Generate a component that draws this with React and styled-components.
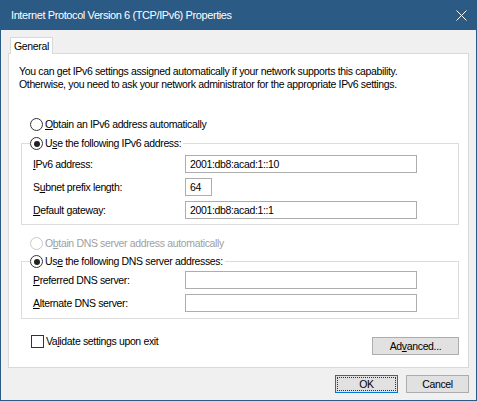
import React from 'react'
import styled, { createGlobalStyle } from 'styled-components'

const GlobalStyle = createGlobalStyle`
  html, body {
    margin: 0;
    padding: 0;
    background: #ffffff;
  }
  body {
    font-family: "Liberation Sans", Arial, sans-serif;
    font-size: 10.5px;
    letter-spacing: -0.35px;
    color: #000;
  }
`

const Window = styled.div`
  width: 477px;
  height: 401px;
  box-sizing: border-box;
  border: 1px solid #2b5a84;
  border-top: none;
  background: #f0f0f0;
  display: flex;
  flex-direction: column;
`

const TitleBar = styled.div`
  height: 30px;
  flex: none;
  background: #2b5a84;
  color: #fff;
  font-size: 11px;
  letter-spacing: -0.4px;
  display: flex;
  align-items: center;
  justify-content: space-between;
  padding: 0 9px 0 10px;
`

const Close = styled.svg`
  width: 11px;
  height: 11px;
`

const Body = styled.div`
  flex: 1;
  display: flex;
  flex-direction: column;
  padding: 7px 7px 0 7px;
`

const TabStrip = styled.div`
  display: flex;
  padding-left: 2px;
`

const Tab = styled.div`
  height: 16px;
  line-height: 16px;
  padding: 0 3px;
  background: #fff;
  border: 1px solid #d9d9d9;
  border-bottom: none;
  margin-bottom: -1px;
  position: relative;
`

const Panel = styled.div`
  height: 315px;
  box-sizing: border-box;
  background: #fff;
  border: 1px solid #d9d9d9;
  padding: 11px 9px 0 10px;
  display: flex;
  flex-direction: column;
`

const Intro = styled.p`
  margin: 0 0 27px;
  line-height: 13px;
`

const Option = styled.label`
  display: flex;
  align-items: center;
  gap: 2px;
  height: 13px;
  line-height: 13px;
  color: ${p => (p.$disabled ? '#a0a0a0' : '#000')};
  margin: ${p => p.$margin || '0'};
`

const RadioDot = styled.span`
  width: 11px;
  height: 11px;
  border-radius: 50%;
  border: 1px solid ${p => (p.$disabled ? '#c8c8c8' : '#333')};
  background: #fff;
  display: inline-flex;
  align-items: center;
  justify-content: center;
  flex: none;
  &::after {
    content: '';
    width: 6px;
    height: 6px;
    border-radius: 50%;
    background: #222;
    display: ${p => (p.$checked ? 'block' : 'none')};
  }
`

const CheckBox = styled.span`
  width: 11px;
  height: 11px;
  border: 1px solid #333;
  background: #fff;
  flex: none;
`

const Group = styled.fieldset`
  margin: 0 0 0 2px;
  width: 438px;
  box-sizing: border-box;
  border: 1px solid #dcdcdc;
  padding: ${p => p.$top || '3px'} 0 ${p => p.$bottom || '5px'} 11px;
  display: flex;
  flex-direction: column;
  gap: 5px;
`

const Legend = styled.legend`
  padding: 0 2px 0 0;
  margin-left: -3px;
`

const Row = styled.div`
  display: flex;
  align-items: center;
  height: 18px;
`

const FieldLabel = styled.span`
  width: 152px;
  flex: none;
`

const TextBox = styled.div`
  width: ${p => p.$w || '232px'};
  height: 18px;
  box-sizing: border-box;
  border: 1px solid #adadad;
  padding: 0 4px;
  line-height: 16px;
  background: #fff;
`

const U = styled.span`
  text-decoration: underline;
`

const BottomRow = styled.div`
  display: flex;
  align-items: flex-start;
  justify-content: space-between;
  margin-top: 16px;
  padding-left: 12px;
`

const Button = styled.div`
  width: ${p => p.$w || '63px'};
  height: 18px;
  box-sizing: border-box;
  border: 1px solid ${p => (p.$default ? '#0078d7' : '#adadad')};
  background: #e1e1e1;
  display: flex;
  align-items: center;
  justify-content: center;
  position: relative;
  margin-top: ${p => p.$top || '0'};
  ${p =>
    p.$default &&
    `&::after {
      content: '';
      position: absolute;
      inset: 1px;
      border: 1px dotted #333;
    }`}
`

const Footer = styled.div`
  flex: 1;
  display: flex;
  justify-content: flex-end;
  align-items: center;
  gap: 8px;
`

const App = () => {
  return (
    <>
      <GlobalStyle />
      <Window>
        <TitleBar>
          <span>Internet Protocol Version 6 (TCP/IPv6) Properties</span>
          <Close viewBox="0 0 11 11">
            <path d="M0.5 0.5 L10.5 10.5 M10.5 0.5 L0.5 10.5" stroke="#fff" strokeWidth="1" fill="none" />
          </Close>
        </TitleBar>
        <Body>
          <TabStrip>
            <Tab>General</Tab>
          </TabStrip>
          <Panel>
            <Intro>
              You can get IPv6 settings assigned automatically if your network supports this capability.
              <br />
              Otherwise, you need to ask your network administrator for the appropriate IPv6 settings.
            </Intro>
            <Option $margin="0 0 6px 11px">
              <RadioDot />
              <span><U>O</U>btain an IPv6 address automatically</span>
            </Option>
            <Group $top="5px">
              <Legend>
                <Option>
                  <RadioDot $checked />
                  <span>U<U>s</U>e the following IPv6 address:</span>
                </Option>
              </Legend>
              <Row>
                <FieldLabel><U>I</U>Pv6 address:</FieldLabel>
                <TextBox>2001:db8:acad:1::10</TextBox>
              </Row>
              <Row>
                <FieldLabel>S<U>u</U>bnet prefix length:</FieldLabel>
                <TextBox $w="27px">64</TextBox>
              </Row>
              <Row>
                <FieldLabel><U>D</U>efault gateway:</FieldLabel>
                <TextBox>2001:db8:acad:1::1</TextBox>
              </Row>
            </Group>
            <Option $disabled $margin="12px 0 5px 11px">
              <RadioDot $disabled />
              <span>O<U>b</U>tain DNS server address automatically</span>
            </Option>
            <Group $bottom="6px">
              <Legend>
                <Option>
                  <RadioDot $checked />
                  <span>Us<U>e</U> the following DNS server addresses:</span>
                </Option>
              </Legend>
              <Row>
                <FieldLabel><U>P</U>referred DNS server:</FieldLabel>
                <TextBox />
              </Row>
              <Row>
                <FieldLabel><U>A</U>lternate DNS server:</FieldLabel>
                <TextBox />
              </Row>
            </Group>
            <BottomRow>
              <Option>
                <CheckBox />
                <span>Va<U>l</U>idate settings upon exit</span>
              </Option>
              <Button $w="87px" $top="2px">Ad<U>v</U>anced...</Button>
            </BottomRow>
          </Panel>
          <Footer>
            <Button $default>OK</Button>
            <Button>Cancel</Button>
          </Footer>
        </Body>
      </Window>
    </>
  )
}

export default App
